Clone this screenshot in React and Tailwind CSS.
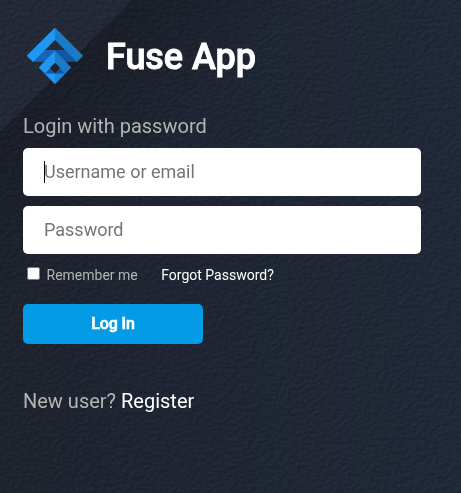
function Backdrop() {
  return (
    <svg className="col-start-1 row-start-1 h-[493px] w-full" viewBox="0 0 461 493" preserveAspectRatio="none" aria-hidden="true">
      <defs>
        <linearGradient id="base" x1="0" y1="0" x2="1" y2="0">
          <stop offset="0" stopColor="#1c212b" />
          <stop offset="0.35" stopColor="#1d2330" />
          <stop offset="1" stopColor="#1f2635" />
        </linearGradient>
        <linearGradient id="shade" gradientUnits="userSpaceOnUse" x1="66" y1="66" x2="155" y2="155">
          <stop offset="0" stopColor="#171a23" stopOpacity="0.75" />
          <stop offset="1" stopColor="#171a23" stopOpacity="0" />
        </linearGradient>
        <filter id="leather" x="0" y="0" width="100%" height="100%" colorInterpolationFilters="sRGB">
          <feTurbulence type="fractalNoise" baseFrequency="0.22 0.28" numOctaves="3" seed="8" result="noise" />
          <feDiffuseLighting in="noise" surfaceScale="1.3" diffuseConstant="0.75" lightingColor="#ffffff">
            <feDistantLight azimuth="235" elevation="50" />
          </feDiffuseLighting>
        </filter>
      </defs>
      <rect width="461" height="493" fill="url(#base)" />
      <path d="M132 0H461V493H0V132Z" fill="url(#shade)" />
      <path d="M0 0H132L0 132Z" fill="#212734" />
      <rect width="461" height="493" filter="url(#leather)" opacity="0.28" className="mix-blend-soft-light" />
    </svg>
  );
}

function Logo() {
  return (
    <svg className="h-16 w-16" viewBox="23 24 64 64" aria-hidden="true">
      <path d="M37.5 50H55V61.7H32.5Z" fill="#1565b8" />
      <path d="M55 50H72.5L77.5 61.7H55Z" fill="#1257a3" />
      <path d="M55 27.5V40L33 61.9L26.7 55.7Z" fill="#2196f3" />
      <path d="M55 27.5V40L77 61.9L83.1 55.7Z" fill="#1c7bc8" />
      <path d="M55 50.7L38.7 67.5L55 84Z" fill="#2196f3" />
      <path d="M55 50.7L71.3 67.5L55 84Z" fill="#1c7bc8" />
      <path d="M49.3 69H60.7L65 73.7H45Z" fill="#1257a3" />
      <path d="M45 73.7H55V84Z" fill="#2196f3" />
      <path d="M55 73.7H65L55 84Z" fill="#1c86dc" />
      <path d="M55 62.7L60.2 68L55 73.2L49.8 68Z" fill="#1c212c" />
    </svg>
  );
}

export default function App() {
  return (
    <main className="grid h-[493px] w-full overflow-hidden bg-[#1e2431] font-[Roboto,sans-serif]">
      <Backdrop />
      <section className="z-10 col-start-1 row-start-1 flex flex-col items-start pl-[23px] pt-6">
        <header className="flex h-16 items-center">
          <Logo />
          <h1 className="ml-[19px] pt-px text-[36px] font-medium leading-[64px] tracking-[-0.05px] text-white [-webkit-text-stroke:0.9px_white]">Fuse App</h1>
        </header>
        <p className="mt-6 text-[20px] leading-7 text-[#b4b4b4]">Login with password</p>
        <form className="flex flex-col items-start pt-2">
          <div className="flex h-12 w-[398px] items-center rounded-[5px] bg-white pl-[21px]">
            <span className="h-[22px] w-px bg-black" />
            <input className="-ml-px mb-0.5 w-[340px] text-[18px] outline-none placeholder:text-[#757575]" placeholder="Username or email" />
          </div>
          <div className="mt-2.5 flex h-12 w-[398px] items-center rounded-[5px] bg-white pl-[21px]">
            <input type="password" className="mb-0.5 w-[340px] text-[18px] outline-none placeholder:text-[#757575]" placeholder="Password" />
          </div>
          <div className="mt-[11px] flex h-5 items-center pl-1 text-[14px] leading-5">
            <label className="flex items-center text-[#b4b4b4]">
              <input type="checkbox" className="mb-[3px] mr-[6.5px] h-[13px] w-[13px]" />
              Remember me
            </label>
            <a href="#" className="ml-[23.5px] text-white">Forgot Password?</a>
          </div>
          <button type="button" className="mt-[19px] h-10 w-[180px] rounded-[5px] bg-[#039be5] text-[16px] font-medium tracking-[-0.1px] text-white [-webkit-text-stroke:0.6px_white]">Log In</button>
        </form>
        <p className="mt-[43px] text-[20px] leading-7 text-[#b4b4b4]">
          New user? <a href="#" className="text-white">Register</a>
        </p>
      </section>
    </main>
  );
}
